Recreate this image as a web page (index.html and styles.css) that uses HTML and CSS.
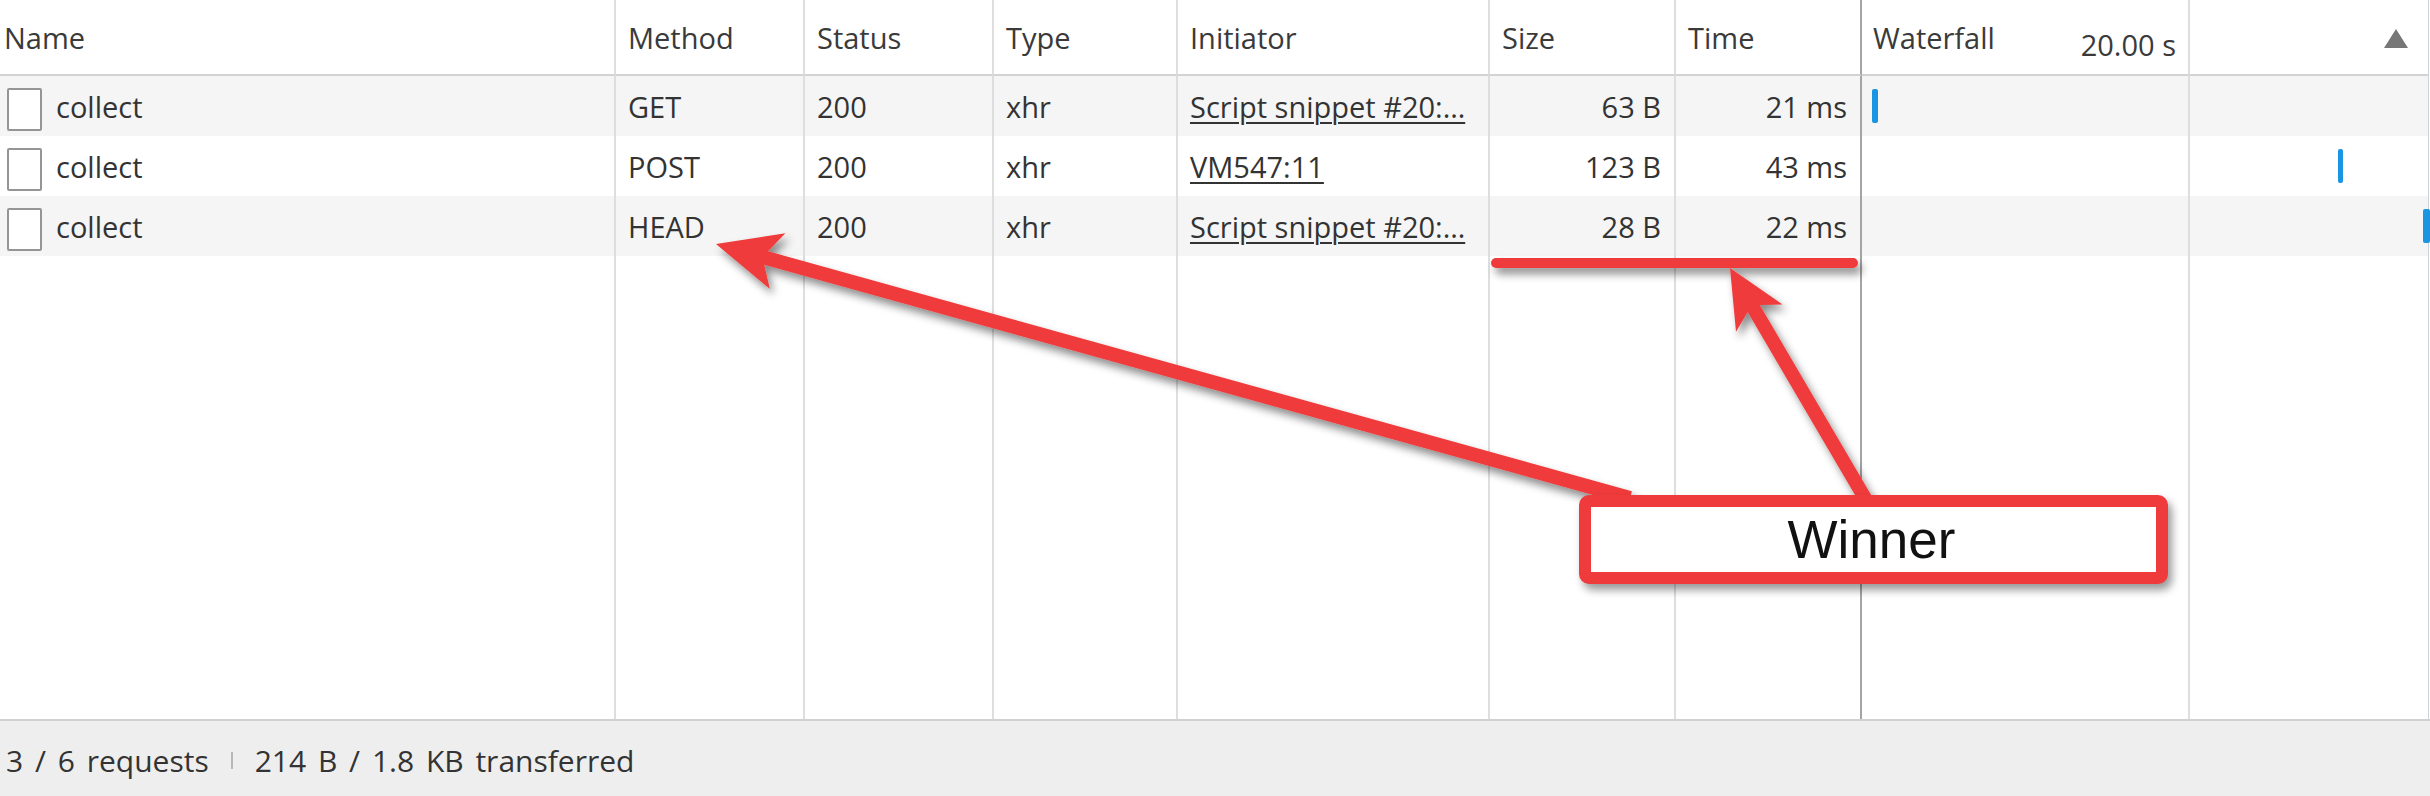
FILE: index.html
```html
<!DOCTYPE html>
<html>
<head>
<meta charset="utf-8">
<link rel="stylesheet" href="styles.css">
</head>
<body>
<div class="page">
  <div class="grid">
    <div class="hcell">Name</div>
    <div class="hcell pad">Method</div>
    <div class="hcell pad">Status</div>
    <div class="hcell pad">Type</div>
    <div class="hcell pad">Initiator</div>
    <div class="hcell pad">Size</div>
    <div class="hcell pad dark">Time</div>
    <div class="hcell pad wf-head"><span>Waterfall</span><span class="wf-scale">20.00 s</span></div>
    <div class="hcell wf-sort"><span class="tri"></span></div>

    <div class="cell odd name"><span class="file"></span><span>collect</span></div>
    <div class="cell odd pad">GET</div>
    <div class="cell odd pad">200</div>
    <div class="cell odd pad">xhr</div>
    <div class="cell odd pad"><span class="link">Script snippet #20:…</span></div>
    <div class="cell odd pad num">63 B</div>
    <div class="cell odd pad num dark">21 ms</div>
    <div class="cell odd"><span class="bar" style="margin-left:10px;width:6px"></span></div>
    <div class="cell odd last"></div>

    <div class="cell name"><span class="file"></span><span>collect</span></div>
    <div class="cell pad">POST</div>
    <div class="cell pad">200</div>
    <div class="cell pad">xhr</div>
    <div class="cell pad"><span class="link">VM547:11</span></div>
    <div class="cell pad num">123 B</div>
    <div class="cell pad num dark">43 ms</div>
    <div class="cell"></div>
    <div class="cell last"><span class="bar" style="margin-left:148px;width:5px"></span></div>

    <div class="cell odd name"><span class="file"></span><span>collect</span></div>
    <div class="cell odd pad">HEAD</div>
    <div class="cell odd pad">200</div>
    <div class="cell odd pad">xhr</div>
    <div class="cell odd pad"><span class="link">Script snippet #20:…</span></div>
    <div class="cell odd pad num">28 B</div>
    <div class="cell odd pad num dark">22 ms</div>
    <div class="cell odd"></div>
    <div class="cell odd last"><span class="bar" style="margin-left:233px;width:7px"></span></div>

    <div class="fill"></div>
    <div class="fill"></div>
    <div class="fill"></div>
    <div class="fill"></div>
    <div class="fill"></div>
    <div class="fill"></div>
    <div class="fill dark"></div>
    <div class="fill"></div>
    <div class="fill last"></div>
  </div>
  <div class="footer">
    <span>3 / 6 requests</span>
    <span class="sep"></span>
    <span>214 B / 1.8 KB transferred</span>
  </div>

  <div class="annot">
    <svg width="2430" height="796" viewBox="0 0 2430 796">
      <defs>
        <filter id="sh" x="-10%" y="-10%" width="130%" height="160%">
          <feDropShadow dx="4" dy="6" stdDeviation="4" flood-color="#000" flood-opacity="0.45"/>
        </filter>
      </defs>
      <g fill="#ef3b3b" filter="url(#sh)">
        <line x1="1496" y1="263" x2="1853" y2="263" stroke="#ef3b3b" stroke-width="10" stroke-linecap="round"/>
        <polygon points="716,244 769.9,289.1 764.2,264.7 1628.1,504.7 1631.9,491.3 768,251.2 785.4,233.2"/>
        <polygon points="1730,268 1736,331.7 1747.7,312.1 1860,503.5 1872,496.5 1759.8,305 1782.6,304.4"/>
      </g>
    </svg>
    <div class="callout">Winner</div>
  </div>
</div>
</body>
</html>
```
FILE: styles.css
```css
html, body {
  margin: 0;
  padding: 0;
  background: #ffffff;
}
.page {
  position: relative;
  width: 2430px;
  height: 796px;
  display: flex;
  flex-direction: column;
  font-family: "Open Sans", "Noto Sans", sans-serif;
  font-size: 29px;
  color: #333333;
  overflow: hidden;
}
.grid {
  height: 719px;
  display: grid;
  grid-template-columns: 616px 189px 189px 184px 312px 186px 186px 328px 240px;
  grid-template-rows: 76px 60px 60px 60px 1fr;
}
.hcell, .cell, .fill {
  box-sizing: border-box;
  border-right: 2px solid #dedede;
  display: flex;
  align-items: center;
  white-space: nowrap;
  overflow: visible;
  min-width: 0;
}
.hcell {
  border-bottom: 2px solid #d2d2d2;
  padding-left: 4px;
  color: #3a3a3a;
}
.pad {
  padding-left: 12px;
}
.num {
  justify-content: flex-end;
  padding-right: 13px;
}
.dark {
  border-right-color: #a4a4a4;
}
.last {
  border-right: 1px solid #c9d3dc;
  margin-right: 1px;
}
.odd {
  background: #f5f5f5;
}
.wf-head {
  justify-content: space-between;
  padding-left: 11px;
  padding-right: 12px;
}
.wf-scale {
  padding-top: 14px;
}
.wf-sort {
  justify-content: flex-end;
  padding-right: 20px;
  border-right: 1px solid #c9d3dc;
  margin-right: 1px;
}
.tri {
  width: 0;
  height: 0;
  border-left: 12px solid transparent;
  border-right: 12px solid transparent;
  border-bottom: 19px solid #777777;
  margin-top: 2px;
}
.name {
  padding-left: 7px;
}
.file {
  box-sizing: border-box;
  width: 35px;
  height: 43px;
  border: 2px solid #959595;
  border-radius: 2px;
  background: #ffffff;
  margin-top: 6px;
  margin-right: 14px;
  flex: none;
}
.link {
  text-decoration: underline;
  text-decoration-thickness: 2px;
  text-underline-offset: 4px;
  color: #333333;
}
.bar {
  display: block;
  height: 34px;
  background: #1a95e2;
  border-radius: 2px;
  flex: none;
}
.footer {
  box-sizing: border-box;
  height: 77px;
  border-top: 2px solid #d0d0d0;
  background: #eeeeee;
  display: flex;
  align-items: center;
  padding: 4px 0 0 6px;
  white-space: nowrap;
  font-size: 30px;
  word-spacing: 4px;
}
.sep {
  width: 2px;
  height: 17px;
  background: #b8b8b8;
  margin: 0 22px 0 22px;
}
.annot {
  position: absolute;
  left: 0;
  top: 0;
  width: 2430px;
  height: 796px;
  pointer-events: none;
}
.annot svg {
  position: absolute;
  left: 0;
  top: 0;
}
.callout {
  position: absolute;
  left: 1579px;
  top: 495px;
  width: 589px;
  height: 89px;
  box-sizing: border-box;
  border: 12px solid #ef3b3b;
  border-radius: 10px;
  background: #ffffff;
  box-shadow: 4px 6px 8px rgba(0, 0, 0, 0.4);
  display: flex;
  align-items: center;
  justify-content: center;
  padding-right: 4px;
  font-family: "Liberation Sans", Arial, sans-serif;
  font-size: 53px;
  color: #111111;
}
```
